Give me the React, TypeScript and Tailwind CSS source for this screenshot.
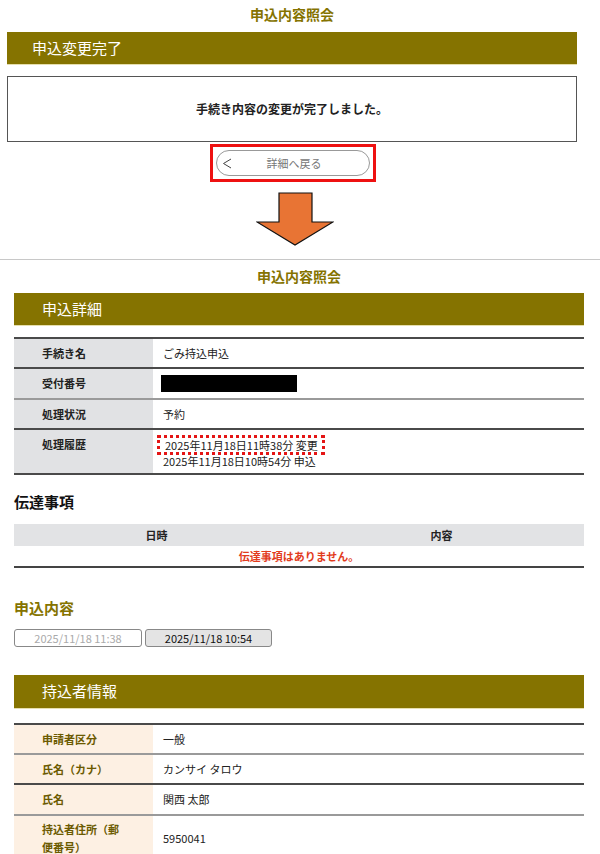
import React from "react";

const Bar = ({ title, className = "" }: { title: string; className?: string }) => (
  <div className={`bg-[#857300] flex items-center text-white text-[15px] border-b border-[#e6dfae] ${className}`}>
    {title}
  </div>
);

type Row = { label: string; value: React.ReactNode; h: string; border: string };

const detailRows: Row[] = [
  { label: "手続き名", value: "ごみ持込申込", h: "h-[30px]", border: "border-[#4a4a4a]" },
  {
    label: "受付番号",
    value: <div className="w-[136px] h-[17px] bg-black -ml-[2px]" />,
    h: "h-[31px]",
    border: "border-[#9a9a9a]",
  },
  { label: "処理状況", value: "予約", h: "h-[30px]", border: "border-[#4a4a4a]" },
];

const ownerRows = [
  { label: "申請者区分", value: "一般", border: "border-[#9a9a9a]", h: "h-[30px]" },
  { label: "氏名（カナ）", value: "カンサイ タロウ", border: "border-[#4a4a4a]", h: "h-[30px]" },
  { label: "氏名", value: "関西 太郎", border: "border-[#9a9a9a]", h: "h-[31px]" },
];

export default function App() {
  return (
    <div className="w-[600px] bg-white text-[11px] text-[#222]" style={{ fontFamily: '"Noto Sans CJK JP", "Noto Sans", sans-serif' }}>
      {/* completion screen */}
      <div className="ml-[7px] w-[570px]">
        <div className="h-[32px] flex items-center justify-center text-[14px] font-bold text-[#857300] pb-[4px]">申込内容照会</div>
        <Bar title="申込変更完了" className="pl-[25px] h-[33px]" />
        <div className="mt-[11px] h-[66px] border border-[#555] flex items-center justify-center font-bold text-[12px]">
          手続き内容の変更が完了しました。
        </div>
        <div className="flex justify-center mt-[2px] pl-[2px]">
          <div className="w-[166px] h-[38px] border-[3px] border-[#ee1111] p-[3px]">
            <button className="w-full h-[26px] rounded-full border border-[#999] bg-white relative flex items-center justify-center text-[11px] text-[#777]">
              <svg className="absolute left-[5px] top-[7px]" width="10" height="11" viewBox="0 0 10 11">
                <polyline points="9,1 1.5,5.5 9,10" fill="none" stroke="#444" strokeWidth="1" />
              </svg>
              <span className="ml-[2px]">詳細へ戻る</span>
            </button>
          </div>
        </div>
        <div className="flex justify-center mt-[10px] pl-[5px]">
          <svg width="78" height="54" viewBox="0 0 78 54">
            <polygon points="23,1 56,1 56,30 77,30 39,53 1,30 23,30" fill="#e87434" stroke="#111" strokeWidth="1.2" />
          </svg>
        </div>
      </div>
      <div className="mt-[13px] border-t border-[#c8c8c8]" />

      {/* detail screen */}
      <div className="ml-[14px] w-[570px]">
        <div className="h-[33px] flex items-center justify-center text-[14px] font-bold text-[#857300]">申込内容照会</div>
        <Bar title="申込詳細" className="pl-[28px] h-[33px]" />
        <div className="mt-[11px] border-t-2 border-[#4a4a4a]">
          {detailRows.map((r) => (
            <div key={r.label} className={`flex ${r.h} border-b-2 ${r.border}`}>
              <div className="w-[139px] bg-[#e1e2e4] pl-[28px] flex items-center font-bold">{r.label}</div>
              <div className="flex-1 pl-[10px] flex items-center">{r.value}</div>
            </div>
          ))}
          <div className="flex h-[45px] border-b-2 border-[#4a4a4a]">
            <div className="w-[139px] bg-[#e1e2e4] pl-[28px] pt-[6px] font-bold">処理履歴</div>
            <div className="flex-1 pl-[10px] pt-[5px] leading-[16px]">
              <div className="inline-block -ml-[6px] pl-[5px] pr-[4px] border-[3px] border-dotted border-[#e41515] leading-[14px]">
                2025年11月18日11時38分 変更
              </div>
              <div className="-mt-[2px]">2025年11月18日10時54分 申込</div>
            </div>
          </div>
        </div>

        <div className="mt-[14px] text-[15px] font-bold text-[#111] h-[26px] flex items-center">伝達事項</div>
        <div className="mt-[9px]">
          <div className="flex h-[22px] bg-[#e2e3e5] font-bold text-[11px]">
            <div className="w-1/2 flex items-center justify-center">日時</div>
            <div className="w-1/2 flex items-center justify-center">内容</div>
          </div>
          <div className="h-[22px] flex items-center justify-center text-[#e23b1c] font-bold text-[11px] border-b-2 border-[#444]">
            伝達事項はありません。
          </div>
        </div>

        <div className="mt-[27px] h-[26px] flex items-center text-[15px] font-bold text-[#857300]">申込内容</div>
        <div className="mt-[8px] flex gap-[3px]">
          <button className="w-[128px] h-[18px] border border-[#888] rounded-[3px] bg-white text-[#aaa] text-[11px] flex items-center justify-center">
            2025/11/18 11:38
          </button>
          <button className="w-[127px] h-[18px] border border-[#888] rounded-[3px] bg-[#e4e4e4] text-[#111] text-[11px] flex items-center justify-center">
            2025/11/18 10:54
          </button>
        </div>

        <Bar title="持込者情報" className="mt-[28px] pl-[28px] h-[34px]" />
        <div className="mt-[14px] border-t-2 border-[#4a4a4a]">
          {ownerRows.map((r) => (
            <div key={r.label} className={`flex ${r.h} border-b-2 ${r.border}`}>
              <div className="w-[139px] bg-[#fdf0e3] pl-[28px] flex items-center font-bold text-[#6b5a00]">{r.label}</div>
              <div className="flex-1 pl-[10px] flex items-center">{r.value}</div>
            </div>
          ))}
          <div className="flex h-[44px]">
            <div className="w-[139px] bg-[#fdf0e3] pl-[28px] pr-[30px] flex items-center font-bold text-[#6b5a00] leading-[18px]">
              持込者住所（郵便番号）
            </div>
            <div className="flex-1 pl-[10px] flex items-center">5950041</div>
          </div>
        </div>
      </div>
    </div>
  );
}
